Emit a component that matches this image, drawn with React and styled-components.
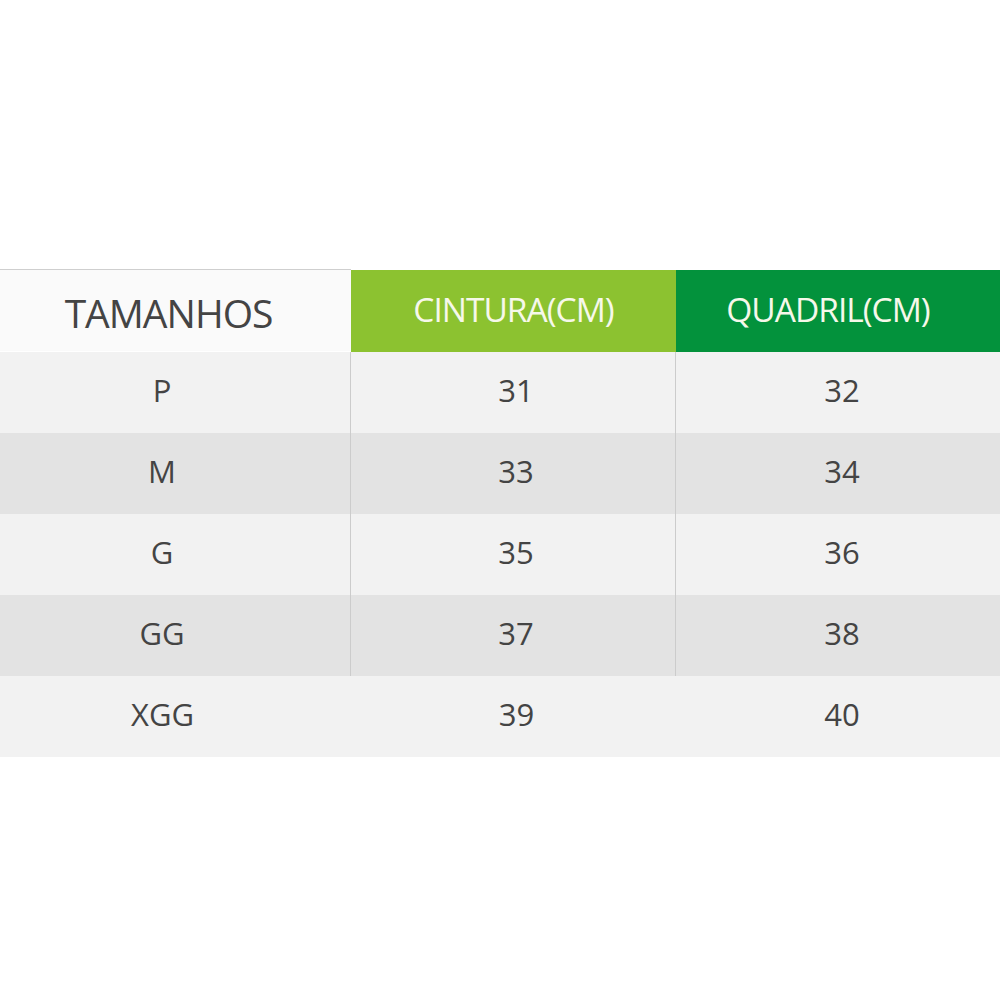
import React from 'react';
import styled, { createGlobalStyle } from 'styled-components';

const GlobalStyle = createGlobalStyle`
  html, body {
    margin: 0;
    padding: 0;
    background: #ffffff;
  }
  body {
    font-family: 'Open Sans', 'Liberation Sans', sans-serif;
  }
`;

const Page = styled.div`
  width: 1000px;
  height: 1000px;
  padding-top: 269px;
  box-sizing: border-box;
  background: #ffffff;
`;

const Table = styled.div`
  display: grid;
  grid-template-columns: 351px 325px 324px;
`;

const HeadCell = styled.div`
  height: 82px;
  margin-top: ${(p) => (p.tone === 'plain' ? '0' : '1px')};
  border-top: ${(p) => (p.tone === 'plain' ? '1px solid #cfcfcf' : 'none')};
  background: ${(p) =>
    p.tone === 'light' ? '#8cc230' : p.tone === 'dark' ? '#03923c' : '#fafafa'};
  color: ${(p) => (p.tone === 'plain' ? '#444444' : '#f6f8ea')};
  display: flex;
  align-items: center;
  justify-content: center;
  font-size: ${(p) => (p.tone === 'plain' ? '39px' : '33.5px')};
  letter-spacing: -1px;
  padding: ${(p) =>
    p.tone === 'plain' ? '4px 14px 0 0' : p.tone === 'dark' ? '0 20px 4px 0' : '0 0 4px 0'};
  box-sizing: border-box;
`;

const Cell = styled.div`
  height: 81px;
  background: ${(p) => (p.shade ? '#e3e3e3' : '#f2f2f2')};
  border-right: ${(p) => (p.line ? '1px solid #cccccc' : 'none')};
  color: #444444;
  font-size: 31px;
  display: flex;
  align-items: center;
  justify-content: center;
  padding: ${(p) => p.pad || '0 0 6px 0'};
  box-sizing: border-box;
`;

const rows = [
  ['P', '31', '32'],
  ['M', '33', '34'],
  ['G', '35', '36'],
  ['GG', '37', '38'],
  ['XGG', '39', '40'],
];

export default function App() {
  return (
    <Page>
      <GlobalStyle />
      <Table>
        <HeadCell tone="plain">TAMANHOS</HeadCell>
        <HeadCell tone="light">CINTURA(CM)</HeadCell>
        <HeadCell tone="dark">QUADRIL(CM)</HeadCell>
        {rows.map((r, i) => {
          const shade = i % 2 === 1;
          const line = i < rows.length - 1;
          return (
            <React.Fragment key={r[0]}>
              <Cell shade={shade} line={line} pad="0 26px 6px 0">
                {r[0]}
              </Cell>
              <Cell shade={shade} line={line} pad="0 0 6px 6px">
                {r[1]}
              </Cell>
              <Cell shade={shade} pad="0 0 6px 8px">
                {r[2]}
              </Cell>
            </React.Fragment>
          );
        })}
      </Table>
    </Page>
  );
}
